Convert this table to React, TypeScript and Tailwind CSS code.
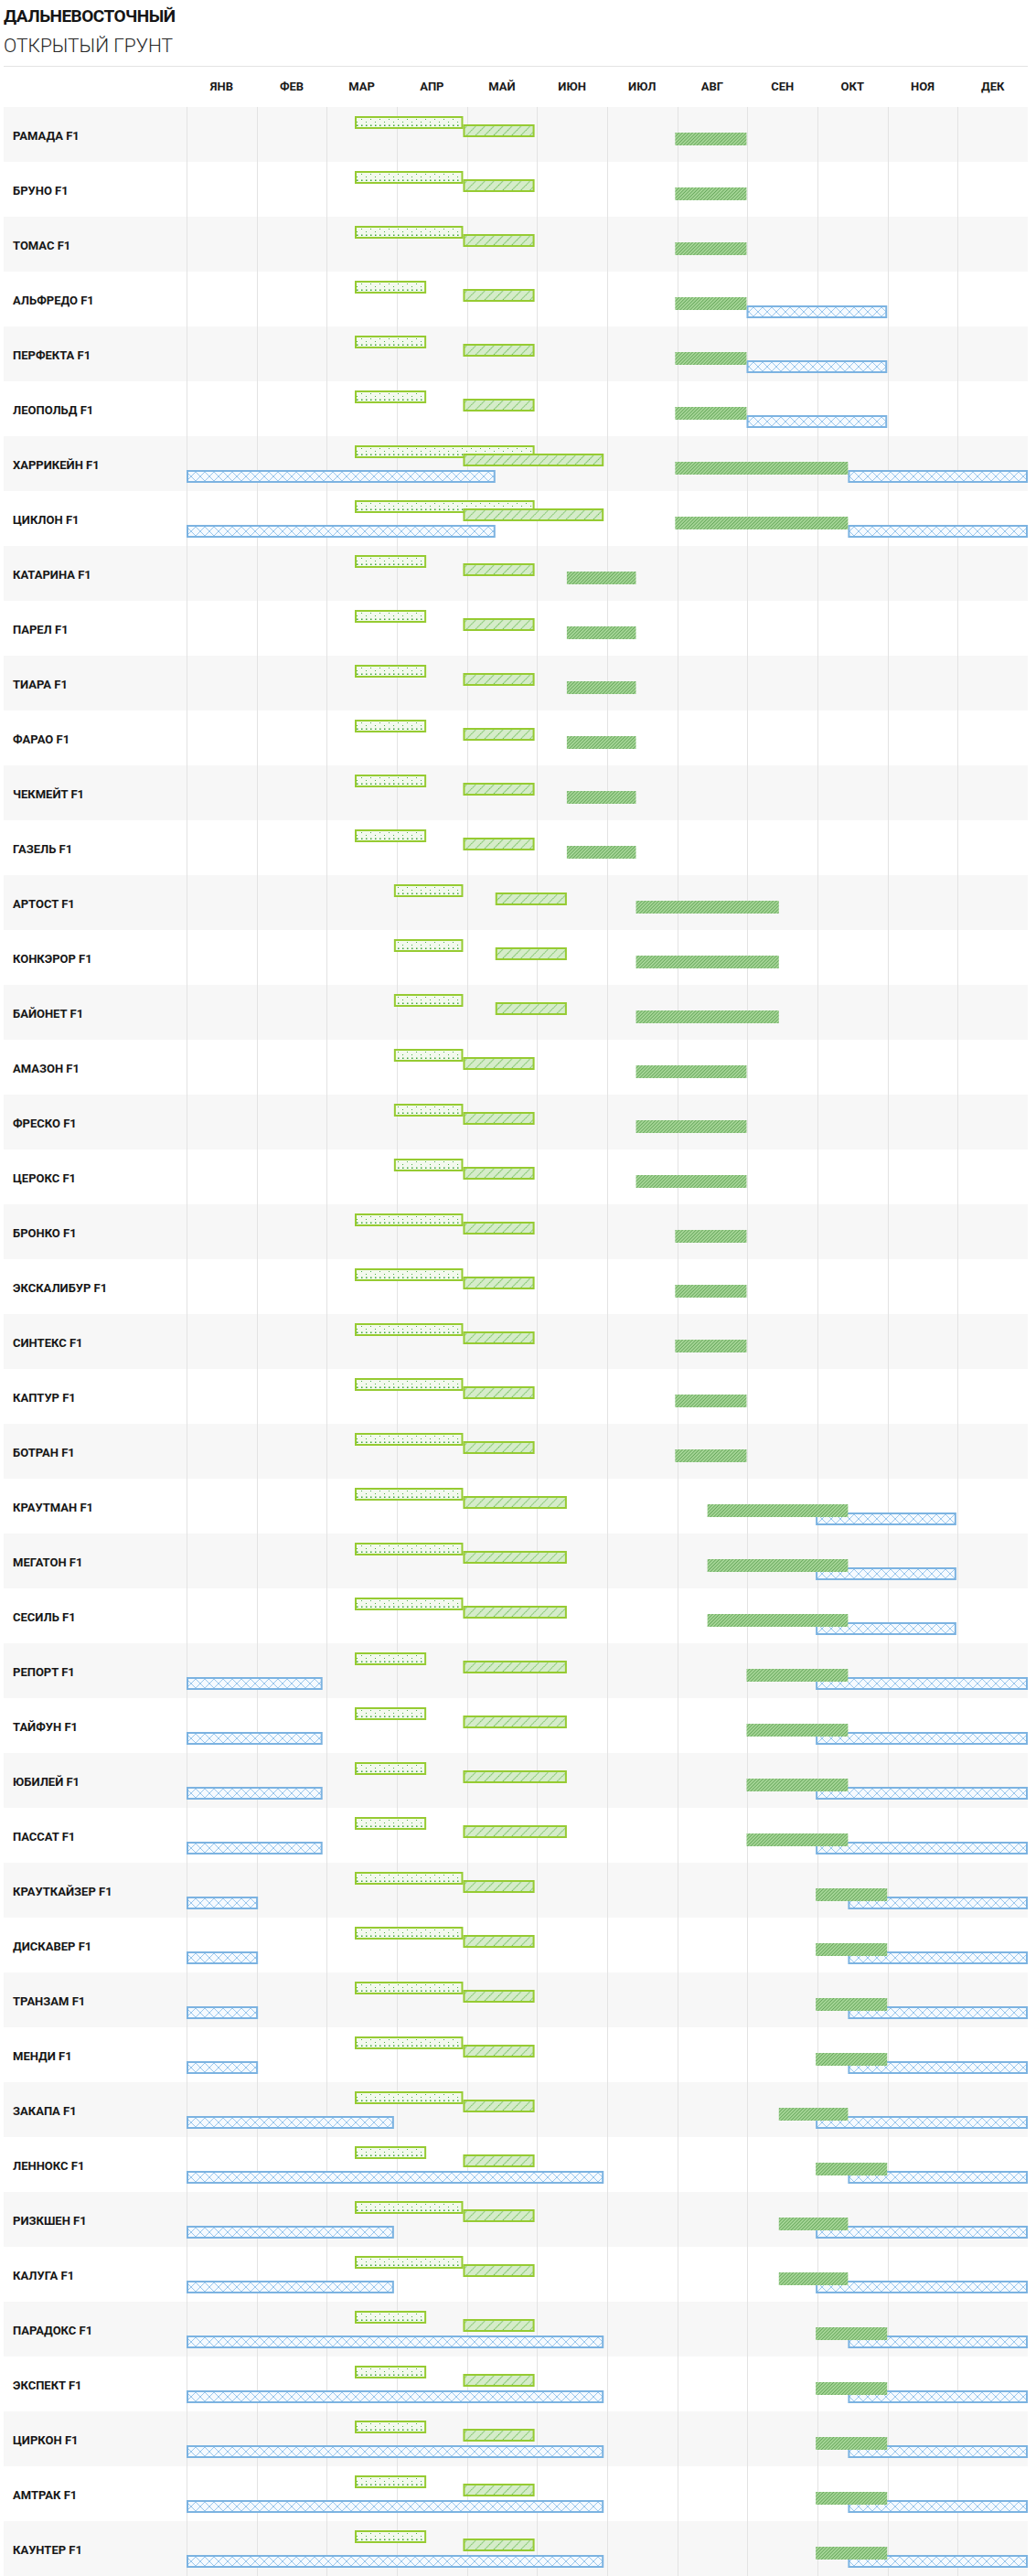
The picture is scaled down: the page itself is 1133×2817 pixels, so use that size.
const MONTHS = ["ЯНВ", "ФЕВ", "МАР", "АПР", "МАЙ", "ИЮН", "ИЮЛ", "АВГ", "СЕН", "ОКТ", "НОЯ", "ДЕК"]

// day of year where each month starts (bars are placed by day, grid by equal months)
const MONTH_START = [0, 31, 59, 90, 120, 151, 181, 212, 243, 273, 304, 334, 365]
const TRACK_W = 920

type Kind = "sow" | "plant" | "harvest" | "store"
type Bar = [Kind, number, number] // half-month units 0..24

const dayOf = (h: number) => (h >= 24 ? 365 : MONTH_START[Math.floor(h / 2)] + (h % 2 ? 14 : 0))
const xOf = (h: number) => (dayOf(h) / 365) * TRACK_W

const TOP: Record<Kind, number> = { sow: 10, plant: 19, harvest: 28, store: 37 }

const ramada: Bar[] = [["sow", 5, 8], ["plant", 8, 10], ["harvest", 14, 16]]
const alfredo: Bar[] = [["sow", 5, 7], ["plant", 8, 10], ["store", 16, 20], ["harvest", 14, 16]]
const hurricane: Bar[] = [["sow", 5, 10], ["plant", 8, 12], ["store", 0, 9], ["store", 19, 24], ["harvest", 14, 19]]
const katarina: Bar[] = [["sow", 5, 7], ["plant", 8, 10], ["harvest", 11, 13]]
const artost: Bar[] = [["sow", 6, 8], ["plant", 9, 11], ["harvest", 13, 17]]
const amazon: Bar[] = [["sow", 6, 8], ["plant", 8, 10], ["harvest", 13, 16]]
const krautman: Bar[] = [["sow", 5, 8], ["plant", 8, 11], ["store", 18, 22], ["harvest", 15, 19]]
const report: Bar[] = [["sow", 5, 7], ["plant", 8, 11], ["store", 0, 4], ["store", 18, 24], ["harvest", 16, 19]]
const kraut: Bar[] = [["sow", 5, 8], ["plant", 8, 10], ["store", 0, 2], ["store", 19, 24], ["harvest", 18, 20]]
const zakapa: Bar[] = [["sow", 5, 8], ["plant", 8, 10], ["store", 0, 6], ["store", 18, 24], ["harvest", 17, 19]]
const lennox: Bar[] = [["sow", 5, 7], ["plant", 8, 10], ["store", 0, 12], ["store", 19, 24], ["harvest", 18, 20]]

const ROWS: [string, Bar[]][] = [
  ["РАМАДА F1", ramada],
  ["БРУНО F1", ramada],
  ["ТОМАС F1", ramada],
  ["АЛЬФРЕДО F1", alfredo],
  ["ПЕРФЕКТА F1", alfredo],
  ["ЛЕОПОЛЬД F1", alfredo],
  ["ХАРРИКЕЙН F1", hurricane],
  ["ЦИКЛОН F1", hurricane],
  ["КАТАРИНА F1", katarina],
  ["ПАРЕЛ F1", katarina],
  ["ТИАРА F1", katarina],
  ["ФАРАО F1", katarina],
  ["ЧЕКМЕЙТ F1", katarina],
  ["ГАЗЕЛЬ F1", katarina],
  ["АРТОСТ F1", artost],
  ["КОНКЭРОР F1", artost],
  ["БАЙОНЕТ F1", artost],
  ["АМАЗОН F1", amazon],
  ["ФРЕСКО F1", amazon],
  ["ЦЕРОКС F1", amazon],
  ["БРОНКО F1", ramada],
  ["ЭКСКАЛИБУР F1", ramada],
  ["СИНТЕКС F1", ramada],
  ["КАПТУР F1", ramada],
  ["БОТРАН F1", ramada],
  ["КРАУТМАН F1", krautman],
  ["МЕГАТОН F1", krautman],
  ["СЕСИЛЬ F1", krautman],
  ["РЕПОРТ F1", report],
  ["ТАЙФУН F1", report],
  ["ЮБИЛЕЙ F1", report],
  ["ПАССАТ F1", report],
  ["КРАУТКАЙЗЕР F1", kraut],
  ["ДИСКАВЕР F1", kraut],
  ["ТРАНЗАМ F1", kraut],
  ["МЕНДИ F1", kraut],
  ["ЗАКАПА F1", zakapa],
  ["ЛЕННОКС F1", lennox],
  ["РИЗКШЕН F1", zakapa],
  ["КАЛУГА F1", zakapa],
  ["ПАРАДОКС F1", lennox],
  ["ЭКСПЕКТ F1", lennox],
  ["ЦИРКОН F1", lennox],
  ["АМТРАК F1", lennox],
  ["КАУНТЕР F1", lennox],
]

function Patterns() {
  return (
    <svg width="0" height="0" className="absolute">
      <defs>
        <pattern id="sow" patternUnits="userSpaceOnUse" x="0" y="12" width="10" height="10">
          <rect width="10" height="10" fill="#f3f9ee" />
          <rect x="1" y="1" width="1" height="1" fill="#4fae48" />
          <rect x="6" y="4" width="1" height="1" fill="#4fae48" />
          <rect x="1" y="7.5" width="1.5" height="1.5" fill="#3fa63c" />
          <rect x="6" y="7.5" width="1.5" height="1.5" fill="#3fa63c" />
        </pattern>
        <pattern id="plant" patternUnits="userSpaceOnUse" width="7" height="7" patternTransform="rotate(45)">
          <rect width="7" height="7" fill="#d5ecc9" />
          <line x1="0.5" y1="0" x2="0.5" y2="7" stroke="#5fb64a" strokeWidth="0.9" strokeDasharray="1.4 0.8" />
        </pattern>
        <pattern id="harvest" patternUnits="userSpaceOnUse" width="2.6" height="2.6" patternTransform="rotate(45)">
          <rect width="2.6" height="2.6" fill="#a8d799" />
          <line x1="0.5" y1="0" x2="0.5" y2="2.6" stroke="#5c9f52" strokeWidth="0.8" />
        </pattern>
        <pattern id="store" patternUnits="userSpaceOnUse" x="0" y="39" width="10" height="10">
          <rect width="10" height="10" fill="#f5faff" />
          <line x1="0" y1="0" x2="10" y2="10" stroke="#8fc1ea" strokeWidth="0.9" />
          <line x1="10" y1="0" x2="0" y2="10" stroke="#8fc1ea" strokeWidth="0.9" />
        </pattern>
      </defs>
    </svg>
  )
}

function Bars({ bars }: { bars: Bar[] }) {
  return (
    <svg className="absolute inset-0 overflow-visible" width={TRACK_W} height={60}>
      {bars.map(([kind, from, to], i) => {
        const x1 = xOf(from)
        const x2 = xOf(to)
        const y = TOP[kind]
        if (kind === "harvest") {
          return <rect key={i} x={x1} y={y} width={x2 - x1} height={14} fill="url(#harvest)" />
        }
        return (
          <rect
            key={i}
            x={x1 + 1}
            y={y + 1}
            width={x2 - x1 - 2}
            height={12}
            fill={`url(#${kind})`}
            stroke={kind === "store" ? "#7cb3e1" : "#96cb32"}
            strokeWidth={2}
          />
        )
      })}
    </svg>
  )
}

export default function App() {
  return (
    <div className="relative bg-white pl-[4px] font-[Roboto,sans-serif] text-[#1a1a1a]">
      <Patterns />

      {/* Title */}
      <div className="pt-[4px]">
        <h1 className="text-[19px] font-bold leading-[28px] tracking-[-0.5px] text-[#151515]">ДАЛЬНЕВОСТОЧНЫЙ</h1>
        <p className="mt-[4px] text-[21px] font-light leading-[28px] text-[#262626]">ОТКРЫТЫЙ ГРУНТ</p>
      </div>
      <div className="mt-[8px] h-px w-[1120px] bg-[#e3e3e3]" />

      {/* Month header */}
      <div className="flex h-[44px] w-[1120px] items-center">
        <div className="w-[200px]" />
        <div className="grid flex-1 grid-cols-12">
          {MONTHS.map((m) => (
            <div key={m} className="text-center text-[13px] font-bold text-[#1a1a1a]">
              {m}
            </div>
          ))}
        </div>
      </div>

      {/* Rows */}
      <div className="w-[1120px]">
        {ROWS.map(([name, bars], i) => (
          <div key={name} className={`flex h-[60px] ${i % 2 === 0 ? "bg-[#f7f7f7]" : "bg-white"}`}>
            <div className="flex w-[200px] items-center pl-[10px] pt-[4px] text-[13px] font-bold text-[#161616]">
              {name}
            </div>
            <div className="relative grid flex-1 grid-cols-12">
              {MONTHS.map((m) => (
                <div key={m} className="border-l border-[#e3e3e3]" />
              ))}
              <Bars bars={bars} />
            </div>
          </div>
        ))}
      </div>
    </div>
  )
}
